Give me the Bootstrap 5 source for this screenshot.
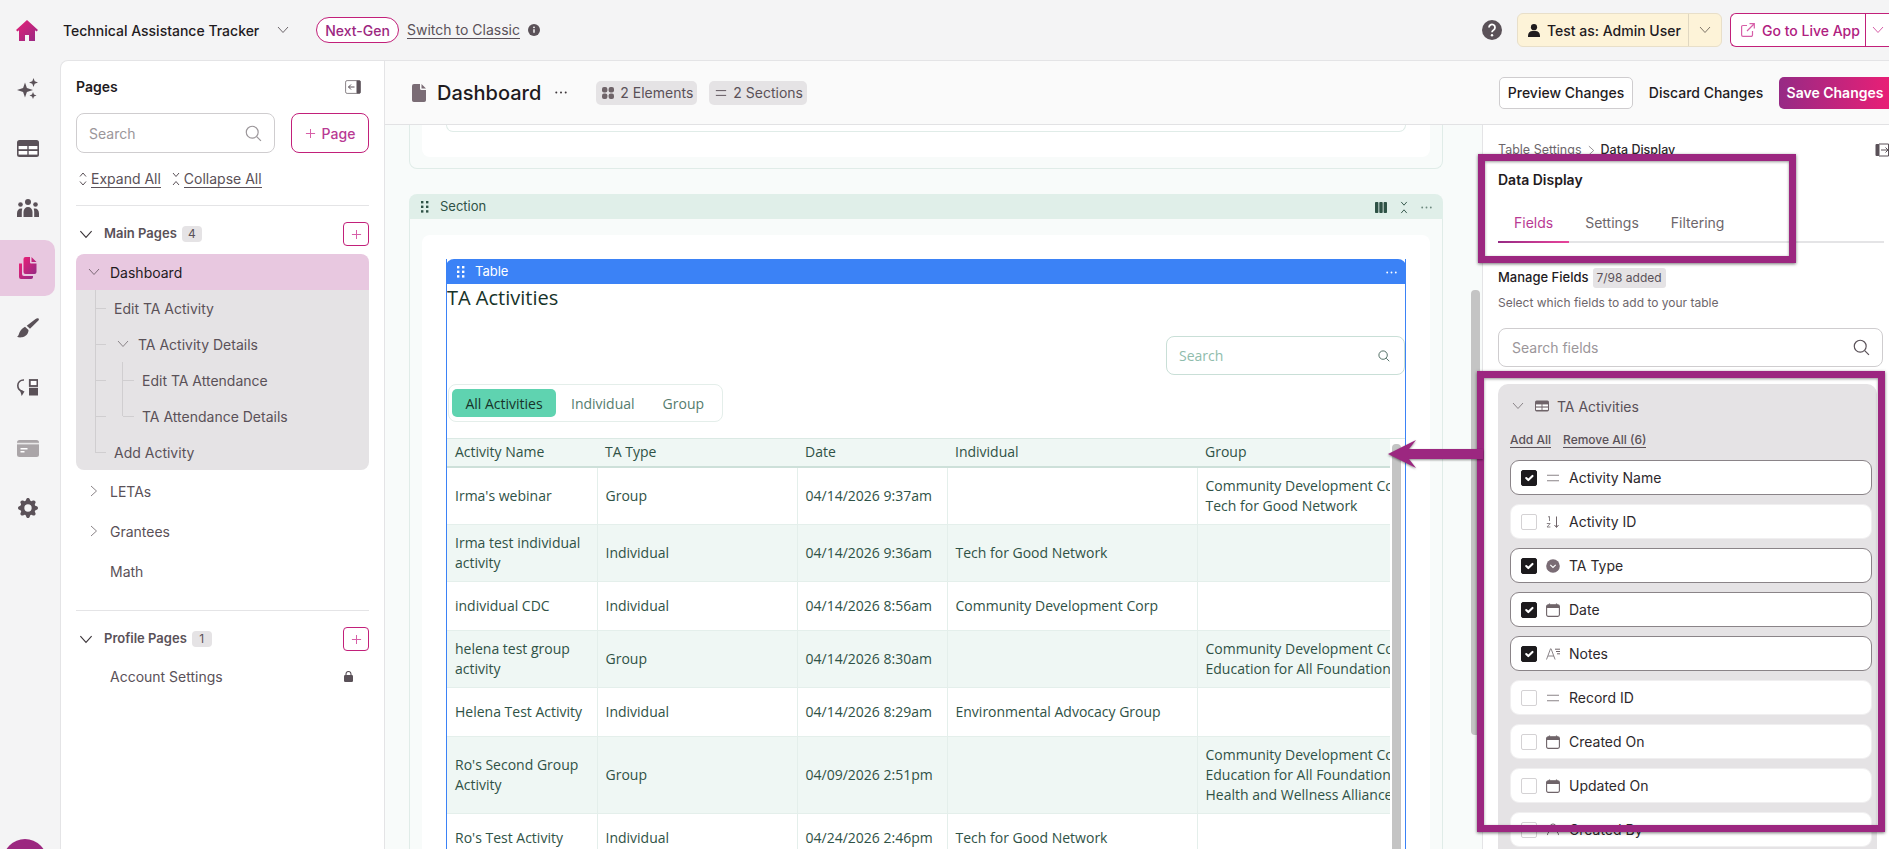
<!DOCTYPE html>
<html lang="en">
<head>
<meta charset="utf-8">
<title>Technical Assistance Tracker</title>
<link href="https://cdn.jsdelivr.net/npm/bootstrap@5.3.0/dist/css/bootstrap.min.css" rel="stylesheet">
<style>
html,body{height:100%;overflow:hidden}
body{font-family:Inter,"Liberation Sans",sans-serif;font-size:14px;color:#1f1b1e;background:#f4f4f5;position:relative}
svg{display:block;flex:none}
.app-top{height:60px;padding:0 0 0 16px}
.top-title{font-weight:500;margin-left:25px;width:198px;white-space:nowrap}
.pill-next{border:1px solid #c2207a;border-radius:14px;height:26px;width:83px;margin-left:27px;color:#9c2780;font-weight:500;background:#fff}
.link-under{color:#5a5158;border-bottom:1px solid #5a5158;line-height:17px;white-space:nowrap}
.test-box{height:34px;width:205px;background:#fdf3d8;border:1px solid #e8dfc9;border-radius:6px;font-weight:500;margin-left:15px}
.live-box{height:34px;width:159px;background:#fff;border:1px solid #c2207a;border-radius:6px 0 0 6px;border-right:0;color:#b0207f;font-weight:500;margin-left:8px}
.split-l{flex:1;padding-left:10px;gap:7px;height:100%}
.split-r{width:33px;height:100%;border-left:1px solid #e0d7c1}
.live-box .split-r{border-left-color:#c2207a}
.app-body{height:789px}
.rail{width:60px;height:789px;overflow:hidden;flex:none}
.rail-item{width:55px;height:56px;margin-bottom:4px;border-radius:0 10px 10px 0}
.rail-item.on{background:#e8c8e0}
.rail-avatar{width:44px;height:44px;border-radius:50%;background:#9c2780;margin:auto 0 -34px 3px;flex:none}
.side{width:325px;background:#fff;border-top:1px solid #e4e4e6;border-left:1px solid #e4e4e6;border-right:1px solid #e4e4e6;border-radius:8px 0 0 0;padding:16px 15px 0 15px;flex:none;overflow:hidden}
.side-title{font-weight:600;line-height:20px}
.input-box{border:1px solid #cfcdcf;border-radius:8px;background:#fff;color:#9b969a;padding:0 12px}
.side-search{width:199px;height:40px}
.btn-page{width:78px;height:40px;border:1px solid #c2207a;border-radius:8px;color:#b93a93;font-weight:500;gap:6px;background:#fff}
.expand-row{height:20px;margin-top:16px;color:#5a5158;padding-left:3px}
.expand-row span{border-bottom:1px solid #5a5158;line-height:17px}
.hair{height:1px;background:#e4e4e6}
.group-head{height:24px;padding-left:3px;color:#5a5158;font-size:13px;font-weight:600}
.count{background:#e5e3e5;border-radius:4px;font-size:12px;font-weight:400;height:16px;min-width:20px;text-align:center;line-height:16px;margin-left:5px}
.btn-add{width:26px;height:24px;border:1px solid #c2207a;border-radius:4px;background:#fff}
.page-on{height:36px;background:#e8c8e0;border-radius:8px 8px 0 0;padding-left:12px;gap:10px;margin-top:8px}
.page-tree{background:#e5e3e5;border-radius:0 0 8px 8px;position:relative;color:#5a5158}
.tree-row{height:36px;padding-left:38px;position:relative}
.tree-row::before{content:"";position:absolute;left:19px;top:0;bottom:0;border-left:1px solid #d0ced0}
.tree-row::after{content:"";position:absolute;left:19px;top:50%;width:11px;border-top:1px solid #d0ced0}
.tree-row.last::before{bottom:50%}
.tree-row.sub{padding-left:66px}
.tree-row.sub i{position:absolute;left:46px;top:0;bottom:0;border-left:1px solid #d0ced0}
.tree-row.sub i::after{content:"";position:absolute;left:0;top:18px;width:11px;border-top:1px solid #d0ced0}
.tree-row.sub.end i{bottom:18px}
.page-row{height:40px;color:#5a5158;padding-left:34px;position:relative}
.page-row svg.chev{position:absolute;left:14px;top:14px}
.main-col{flex:1;min-width:0}
.main-head{height:65px;background:#fafafa;border-top:1px solid #e4e4e6;border-bottom:1px solid #e2e2e4;padding-left:27px;flex:none}
.dash-title{font-size:20px;font-weight:500;margin-left:11px;line-height:28px}
.chip{height:24px;border-radius:5px;background:#e5e3e5;color:#5a5158;padding:0 4px 0 6px;gap:6px;white-space:nowrap}
.btn-prev{height:32px;width:134px;background:#fff;border:1px solid #cfcdcf;border-radius:5px;font-weight:500}
.btn-disc{width:146px;font-weight:500;text-align:center}
.btn-save{height:32px;width:110px;background:linear-gradient(90deg,#962a85,#e81f76);color:#fff;border-radius:5px 0 0 5px;font-weight:600;padding-left:2px}
.work{flex:1;min-height:0;overflow:hidden}
.canvas{width:1097px;background:#f8fbfa;padding-left:24px;overflow:hidden;flex:none}
.canvas-inner{width:1034px;flex:none}
.tail{height:44px;border:1px solid #e0ece8;border-top:0;border-radius:0 0 8px 8px;padding:0 12px 11px}
.tail-in{height:32px;background:#fff;border-radius:0 0 8px 8px;padding:0 24px}
.tail-in div{height:7px;border:1px solid #e0ece8;border-top:0;border-radius:0 0 8px 8px}
.sec-head{height:25px;margin-top:25px;background:#e0efe9;border-radius:8px 8px 0 0;color:#2f5246;padding:1px 11px 0 12px;gap:11px;font-size:13px}
.sec-body{border-left:1px solid #e0ece8;border-right:1px solid #e0ece8;padding:16px 12px 0;height:660px}
.sec-white{background:#fff;border-radius:8px 8px 0 0;padding:24px 24px 0;height:640px}
.tbl-frame{border:solid #3b82f6;border-width:0 1px;height:600px;overflow:hidden}
.tbl-bar{height:25px;background:#3b82f6;color:#fff;border-radius:8px 8px 0 0;margin:0 -1px;padding:1px 9px 0 11px;gap:10px;font-size:13px}
.tbl-title{font-family:"Open Sans",sans-serif;font-size:20px;line-height:28px;color:#17332a}
.tbl-search{width:239px;height:39px;margin:24px 0 0 auto;border:1px solid #c9dfd7;border-radius:8px;padding:0 14px 0 12px;font-family:"Open Sans",sans-serif;color:#8fbcac}
.seg{width:275px;height:38px;margin:9px 0 0 1px;border:1px solid #e4eeea;border-radius:8px;padding:4px 3px;font-family:"Open Sans",sans-serif;color:#557c6e}
.seg-on{width:104px;height:28px;border-radius:5px;background:#5fd3b0;color:#17332a}
.tbl-wrap{margin-top:16px}
.tbl-clip{width:943px;overflow:hidden;flex:none}
.grid-table{table-layout:fixed;width:943px;margin:0;font-family:"Open Sans",sans-serif;font-size:14px;color:#2f5246;--bs-table-bg:transparent;--bs-table-color:#2f5246}
.grid-table th{font-weight:400;background:#eff7f4;height:28px;padding:0 8px;border-top:1px solid #dbe9e4;border-bottom:2px solid #cde0d9;line-height:20px;vertical-align:middle}
.grid-table td{padding:8px;line-height:20px;height:49px;vertical-align:middle;border-bottom:1px solid #e4efeb;border-right:1px solid #e4efeb;white-space:normal}
.grid-table td:last-child{border-right:0;white-space:nowrap;overflow:hidden}
.grid-table tbody tr:nth-child(even) td{background:#eff7f4}
.tbl-track{width:15px;flex:none;padding:5px 4px 0 2px;border-top:1px solid #dbe9e4}
.tbl-thumb{height:500px;background:#c4c4c4;border-radius:4px}
.main-thumb{width:9px;height:445px;background:#c4c4c4;border-radius:4px;margin:165px 0 0 28px;flex:none}
.panel{flex:1;background:#fff;border-left:1px solid #e4e4e6;padding:15px 6px 0 15px;overflow:hidden;min-width:0}
.crumb{height:20px;font-size:12.5px;color:#6d666b;gap:6px}
.crumb b{font-weight:500;color:#2d282c}
.panel-title{margin-top:10px;line-height:20px;font-weight:600;font-size:14px}
.panel-tabs{height:40px;margin-top:13px;width:386px;border-bottom:2px solid #e4e4e6;color:#6d666b}
.panel-tab{height:38px;padding:0 16px}
.panel-tab.on{color:#b93a93;position:relative}
.panel-tab.on::after{content:"";position:absolute;left:0;right:0;bottom:-2px;height:2px;background:linear-gradient(90deg,#962a85,#e8449b)}
.panel-manage{height:20px;margin-top:25px;font-size:13px;font-weight:500}
.panel-manage span{background:#e5e3e5;border-radius:3px;font-size:12px;font-weight:400;color:#5a5158;padding:0 4px;line-height:20px;margin-left:4px}
.panel-hint{font-size:12px;color:#6d666b;margin-top:7px;line-height:16px}
.panel-search{height:39px;margin-top:17px;padding:0 12px 0 13px}
.field-group{width:379px;margin-top:17px;background:#e5e3e5;border-radius:10px 10px 0 0;padding:12px 5px 0 12px;height:480px}
.fg-head{height:20px;color:#5a5158;gap:8px;padding-left:2px}
.fg-links{height:20px;margin-top:14px;font-size:12px;font-weight:500;color:#5a5158;gap:12px}
.fg-links span{border-bottom:1px solid #5a5158;line-height:15px}
.field-row{height:35px;width:362px;margin-top:9px;background:#fff;border:1px solid #f0eff0;border-radius:9px;padding-left:10px;color:#2d282c}
.fg-links + .field-row{margin-top:10px}
.field-row.on{border-color:#8a8488}
.field-row .form-check-input{width:16px;height:16px;margin:0 9px 0 0;flex:none;border-radius:2px;border-color:#d4d2d4}
.field-row .form-check-input:checked{background-color:#1c1a1d;border-color:#1c1a1d}
.field-icon{width:14px;margin-right:9px;flex:none}
.annot{position:absolute;border:7px solid #9c2780;box-shadow:0 1px 3px rgba(0,0,0,.55),inset 0 1px 3px rgba(0,0,0,.4);pointer-events:none}
.annot-a{left:1478px;top:154px;width:318px;height:109px}
.annot-b{left:1477px;top:371px;width:408px;height:461px}
.annot-arrow{position:absolute;left:1385px;top:436px;filter:drop-shadow(0 1px 1px rgba(0,0,0,.45))}
</style>
</head>
<body>
<svg width="0" height="0" style="position:absolute">
<defs>
<linearGradient id="gp" x1="0" y1="0" x2="1" y2="1"><stop offset="0" stop-color="#e81f76"/><stop offset="1" stop-color="#962a85"/></linearGradient>
<symbol id="i-search" viewBox="0 0 16 16"><circle cx="6.8" cy="6.8" r="5.6" fill="none" stroke="currentColor" stroke-width="1.1"/><path d="M11 11l4 4" stroke="currentColor" stroke-width="1.1" fill="none"/></symbol>
<symbol id="i-down" viewBox="0 0 12 8"><path d="M1 1l5 5.5L11 1" fill="none" stroke="currentColor" stroke-width="1"/></symbol>
<symbol id="i-right" viewBox="0 0 8 12"><path d="M1 1l5.5 5L1 11" fill="none" stroke="currentColor" stroke-width="1"/></symbol>
<symbol id="i-plus" viewBox="0 0 12 12"><path d="M6 1v10M1 6h10" stroke="currentColor" stroke-width="1.1" fill="none"/></symbol>
<symbol id="i-grip" viewBox="0 0 8 12"><g fill="currentColor"><rect x="0" y="0" width="2.4" height="2.4"/><rect x="5" y="0" width="2.4" height="2.4"/><rect x="0" y="4.6" width="2.4" height="2.4"/><rect x="5" y="4.6" width="2.4" height="2.4"/><rect x="0" y="9.2" width="2.4" height="2.4"/><rect x="5" y="9.2" width="2.4" height="2.4"/></g></symbol>
<symbol id="i-dots" viewBox="0 0 12 3"><g fill="currentColor"><circle cx="1.3" cy="1.5" r="1"/><circle cx="6" cy="1.5" r="1"/><circle cx="10.7" cy="1.5" r="1"/></g></symbol>
<symbol id="i-eq" viewBox="0 0 14 8"><path d="M1 1.2h12M1 6.8h12" stroke="currentColor" stroke-width="1.1" fill="none"/></symbol>
<symbol id="i-cal" viewBox="0 0 14 14"><path d="M3.500 .5v2M10.500 .5v2" stroke="#6f6469" stroke-width="1.2"/><rect x=".6" y="1.8" width="12.8" height="11.6" rx="1.6" fill="#fff" stroke="#6f6469" stroke-width="1.1"/><path d="M.6 3.400a1.600 1.600 0 0 1 1.600-1.600h9.600a1.600 1.600 0 0 1 1.600 1.600V5H.6z" fill="#6f6469"/></symbol>
<symbol id="i-table" viewBox="0 0 22 17"><rect width="22" height="17" rx="2.500" fill="currentColor"/><g fill="#fff"><rect x="1.600" y="6" width="8.700" height="3.200"/><rect x="11.700" y="6" width="8.700" height="3.200"/><rect x="1.600" y="11" width="8.700" height="3.600"/><rect x="11.700" y="11" width="8.700" height="3.600"/></g></symbol>
<symbol id="i-collapse" viewBox="0 0 8 14"><path d="M1 1l3 3.500L7 1M1 13l3-3.500L7 13" fill="none" stroke="currentColor" stroke-width="1"/></symbol>
<symbol id="i-expand" viewBox="0 0 8 14"><path d="M1 4.500L4 1l3 3.500M1 9.500L4 13l3-3.500" fill="none" stroke="currentColor" stroke-width="1"/></symbol>
</defs>
</svg>

<header class="app-top d-flex align-items-center">
  <svg width="22" height="21" viewBox="0 0 22 21"><path d="M11 0L0 10l1.500 1.600L3 10.300V21h6v-6h4v6h6V10.300l1.500 1.300L22 10z" fill="url(#gp)"/></svg>
  <div class="top-title">Technical Assistance Tracker</div>
  <svg class="ms-3" width="12" height="8" style="color:#6d666b"><use href="#i-down"/></svg>
  <div class="pill-next d-flex align-items-center justify-content-center">Next-Gen</div>
  <span class="link-under ms-2">Switch to Classic</span>
  <svg class="ms-2" width="12" height="12" viewBox="0 0 12 12"><circle cx="6" cy="6" r="6" fill="#5a5158"/><path d="M6 5.200v3.600" stroke="#fff" stroke-width="1.400"/><circle cx="6" cy="3.300" r=".9" fill="#fff"/></svg>
  <div class="ms-auto d-flex align-items-center">
    <svg width="20" height="20" viewBox="0 0 20 20"><circle cx="10" cy="10" r="10" fill="#5a5158"/><path d="M7 7.500a3 3 0 1 1 4.600 2.500c-1 .6-1.600 1.100-1.600 2.300" fill="none" stroke="#fff" stroke-width="1.800"/><circle cx="10" cy="15.200" r="1.200" fill="#fff"/></svg>
    <div class="test-box d-flex align-items-center">
      <div class="split-l d-flex align-items-center"><svg width="12" height="13" viewBox="0 0 12 13"><circle cx="6" cy="3.200" r="3.100" fill="#1f1b1e"/><path d="M0 13v-1.500C0 8.800 2 7 4.500 7h3C10 7 12 8.800 12 11.500V13z" fill="#1f1b1e"/></svg>Test as: Admin User</div>
      <div class="split-r d-flex align-items-center justify-content-center"><svg width="12" height="8" style="color:#7d7468"><use href="#i-down"/></svg></div>
    </div>
    <div class="live-box d-flex align-items-center">
      <div class="split-l d-flex align-items-center"><svg width="14" height="14" viewBox="0 0 14 14"><path d="M6 2.500H2A1.400 1.400 0 0 0 .6 4v8A1.400 1.400 0 0 0 2 13.400h8A1.400 1.400 0 0 0 11.500 12V8M8.500.7h4.800v4.800M13 1L6 8" fill="none" stroke="#d75fa8" stroke-width="1.200"/></svg>Go to Live App</div>
      <div class="split-r d-flex align-items-center justify-content-center" style="width:24px"><svg width="12" height="8" style="color:#d75fa8"><use href="#i-down"/></svg></div>
    </div>
  </div>
</header>

<div class="app-body d-flex">
  <nav class="rail d-flex flex-column">
    <div class="rail-item d-flex align-items-center justify-content-center"><svg width="21" height="21" viewBox="0 0 21 21"><path fill="#5a5158" d="M8 4.500l1.900 5.600L16 12l-6.100 1.900L8 19.500l-1.900-5.600L0 12l6.100-1.900zM16.500 0l1.200 3.300L21 4.500l-3.300 1.200L16.500 9l-1.200-3.300L12 4.500l3.300-1.200zM16 14l1 2.500 2.500 1-2.500 1-1 2.500-1-2.500-2.500-1 2.500-1z"/></svg></div>
    <div class="rail-item d-flex align-items-center justify-content-center"><svg width="22" height="17" style="color:#5a5158"><use href="#i-table"/></svg></div>
    <div class="rail-item d-flex align-items-center justify-content-center"><svg width="22" height="18" viewBox="0 0 22 18"><g fill="#5a5158"><circle cx="11" cy="3" r="3"/><circle cx="3.500" cy="5.500" r="2.300"/><circle cx="18.500" cy="5.500" r="2.300"/><path d="M6.500 18v-5c0-3 2-5 4.500-5s4.500 2 4.500 5v5z"/><path d="M0 18v-3.500C0 11.500 1.500 9.500 4 9.500c.5 0 1 .1 1.300.3-.3 1-.5 2-.5 3V18zM22 18v-3.500c0-3-1.500-5-4-5-.5 0-1 .1-1.300.3.3 1 .5 2 .5 3V18z"/></g></svg></div>
    <div class="rail-item on d-flex align-items-center justify-content-center"><svg width="19" height="22" viewBox="0 0 19 22"><path d="M1 6.500h3V17a2 2 0 0 0 2 2h9v1.200A1.800 1.800 0 0 1 13.200 22H3a2 2 0 0 1-2-2z" fill="url(#gp)"/><path d="M5.500 2a2 2 0 0 1 2-2h4.500v5.500a1 1 0 0 0 1 1h5.500V15a2 2 0 0 1-2 2H7.500a2 2 0 0 1-2-2zM13.500 0l5 5h-5z" fill="url(#gp)"/></svg></div>
    <div class="rail-item d-flex align-items-center justify-content-center"><svg width="22" height="21" viewBox="0 0 22 21"><path d="M21.500.5c.6.600.5 1.500-.1 2.100L13 10.800l-3.300-3L18.600.9c.9-.7 2.200-1.100 2.900-.4zM8 8.800l3.500 3.200c.2 4-3 6.700-6.500 7.300-1.800.3-3.600.2-5-.5 1.200-.6 1.600-1.700 2-3 .6-2.200 2.700-5.400 6-7z" fill="#5a5158"/></svg></div>
    <div class="rail-item d-flex align-items-center justify-content-center"><svg width="21" height="18" viewBox="0 0 21 18"><path d="M7 1C3.200.8.800 3.300.8 6.500c0 2.800 1.800 5 4.700 6" fill="none" stroke="#5a5158" stroke-width="1.600"/><path d="M2.800 10.500l4.700 2-2.800 4.500z" fill="#5a5158"/><rect x="12.800" y="1" width="7.600" height="6" fill="#fff" stroke="#5a5158" stroke-width="1.800"/><rect x="12" y="8.800" width="9" height="7.700" fill="#5a5158"/></svg></div>
    <div class="rail-item d-flex align-items-center justify-content-center"><svg width="22" height="17" viewBox="0 0 22 17"><rect width="22" height="17" rx="2.500" fill="#aaa5a8"/><rect x="0" y="2.800" width="22" height="1.600" fill="#e9e8e9"/><rect x="3.500" y="8" width="7" height="1.500" fill="#fff"/><rect x="3.500" y="11" width="4" height="1.500" fill="#fff"/></svg></div>
    <div class="rail-item d-flex align-items-center justify-content-center"><svg width="20" height="20" viewBox="0 0 16 16"><path fill="#5a5158" d="M9.405 1.050c-.413-1.400-2.397-1.400-2.810 0l-.1.340a1.464 1.464 0 0 1-2.105.872l-.31-.17c-1.283-.698-2.686.705-1.987 1.987l.169.311c.446.820.023 1.841-.872 2.105l-.34.100c-1.400.413-1.400 2.397 0 2.810l.34.100a1.464 1.464 0 0 1 .872 2.105l-.17.310c-.698 1.283.705 2.686 1.987 1.987l.311-.169a1.464 1.464 0 0 1 2.105.872l.1.340c.413 1.400 2.397 1.400 2.810 0l.1-.340a1.464 1.464 0 0 1 2.105-.872l.31.170c1.283.698 2.686-.705 1.987-1.987l-.169-.311a1.464 1.464 0 0 1 .872-2.105l.34-.100c1.400-.413 1.400-2.397 0-2.810l-.34-.100a1.464 1.464 0 0 1-.872-2.105l.17-.310c.698-1.283-.705-2.686-1.987-1.987l-.311.169a1.464 1.464 0 0 1-2.105-.872l-.1-.340zM8 10.930a2.929 2.929 0 1 1 0-5.860 2.929 2.929 0 0 1 0 5.858z"/></svg></div>
    <div class="rail-avatar"></div>
  </nav>

  <aside class="side">
    <div class="side-title d-flex align-items-center justify-content-between">Pages
      <svg class="me-2" width="16" height="14" viewBox="0 0 16 14"><rect x=".6" y=".6" width="14.800" height="12.800" rx="1.500" fill="none" stroke="#8a8488" stroke-width="1"/><rect x="11.500" y=".5" width="4" height="13" rx="1" fill="#5a5158"/><path d="M9.500 7H3.500M6 4.500L3.500 7 6 9.500" fill="none" stroke="#5a5158" stroke-width="1"/></svg>
    </div>
    <div class="d-flex justify-content-between mt-3">
      <div class="input-box side-search d-flex align-items-center justify-content-between">Search<svg width="17" height="17"><use href="#i-search"/></svg></div>
      <div class="btn-page d-flex align-items-center justify-content-center"><svg width="11" height="11" style="color:#d75fa8"><use href="#i-plus"/></svg>Page</div>
    </div>
    <div class="expand-row d-flex align-items-center">
      <svg width="8" height="14" class="me-1"><use href="#i-expand"/></svg><span>Expand All</span>
      <svg width="8" height="14" class="me-1" style="margin-left:11px"><use href="#i-collapse"/></svg><span>Collapse All</span>
    </div>
    <div class="hair mt-3"></div>
    <div class="group-head d-flex align-items-center mt-3">
      <svg width="14" height="9" style="color:#3c363a;margin-right:11px"><use href="#i-down"/></svg>Main Pages<span class="count">4</span>
      <div class="btn-add ms-auto d-flex align-items-center justify-content-center"><svg width="11" height="11" style="color:#d75fa8"><use href="#i-plus"/></svg></div>
    </div>
    <div class="page-on d-flex align-items-center"><svg width="12" height="8" style="color:#7d6a78"><use href="#i-down"/></svg>Dashboard</div>
    <div class="page-tree">
      <div class="tree-row d-flex align-items-center">Edit TA Activity</div>
      <div class="tree-row d-flex align-items-center"><svg width="12" height="8" style="margin-left:3px;margin-right:9px;color:#8a8488"><use href="#i-down"/></svg>TA Activity Details</div>
      <div class="tree-row sub d-flex align-items-center"><i></i>Edit TA Attendance</div>
      <div class="tree-row sub end d-flex align-items-center"><i></i>TA Attendance Details</div>
      <div class="tree-row last d-flex align-items-center">Add Activity</div>
    </div>
    <div class="page-row d-flex align-items-center" style="margin-top:1px"><svg class="chev" width="8" height="12" style="color:#8a8488"><use href="#i-right"/></svg>LETAs</div>
    <div class="page-row d-flex align-items-center"><svg class="chev" width="8" height="12" style="color:#8a8488"><use href="#i-right"/></svg>Grantees</div>
    <div class="page-row d-flex align-items-center">Math</div>
    <div class="hair" style="margin-top:19px"></div>
    <div class="group-head d-flex align-items-center mt-3">
      <svg width="14" height="9" style="color:#3c363a;margin-right:11px"><use href="#i-down"/></svg>Profile Pages<span class="count">1</span>
      <div class="btn-add ms-auto d-flex align-items-center justify-content-center"><svg width="11" height="11" style="color:#d75fa8"><use href="#i-plus"/></svg></div>
    </div>
    <div class="page-row d-flex align-items-center justify-content-between" style="margin-top:5px;padding-right:16px">Account Settings
      <svg width="9" height="11" viewBox="0 0 9 11"><path d="M2 4.500V3a2.500 2.500 0 0 1 5 0v1.500" fill="none" stroke="#5a5158" stroke-width="1.100"/><rect y="4" width="9" height="7" rx="1.200" fill="#5a5158"/></svg>
    </div>
  </aside>

  <main class="main-col d-flex flex-column">
    <div class="main-head d-flex align-items-center">
      <svg width="14" height="18" viewBox="0 0 14 18"><path d="M2 0h6v4.500a1.500 1.500 0 0 0 1.500 1.500H14v10.200a1.800 1.800 0 0 1-1.800 1.800H1.800A1.800 1.800 0 0 1 0 16.200V2a2 2 0 0 1 2-2zM9.500 0L14 4.500H9.500z" fill="#7a6c75"/></svg>
      <span class="dash-title">Dashboard</span>
      <svg style="margin-left:14px;color:#3c363a" width="12" height="3"><use href="#i-dots"/></svg>
      <div class="chip d-flex align-items-center" style="margin-left:29px;width:101px"><svg width="12" height="12" viewBox="0 0 12 12"><g fill="#6f6469"><rect width="5.400" height="5.400" rx="2"/><rect x="6.600" width="5.400" height="5.400" rx="2"/><rect y="6.600" width="5.400" height="5.400" rx="2"/><rect x="6.600" y="6.600" width="5.400" height="5.400" rx="2"/></g></svg>2 Elements</div>
      <div class="chip d-flex align-items-center" style="margin-left:12px;width:98px"><svg width="12" height="8" style="color:#5a5158"><use href="#i-eq"/></svg>2 Sections</div>
      <div class="ms-auto d-flex align-items-center">
        <div class="btn-prev d-flex align-items-center justify-content-center">Preview Changes</div>
        <div class="btn-disc">Discard Changes</div>
        <div class="btn-save d-flex align-items-center justify-content-center">Save Changes</div>
      </div>
    </div>
    <div class="work d-flex">
      <div class="canvas d-flex">
        <div class="canvas-inner">
          <div class="tail"><div class="tail-in"><div></div></div></div>
          <div class="sec-head d-flex align-items-center">
            <svg width="8" height="12" style="color:#2f5246"><use href="#i-grip"/></svg>Section
            <div class="ms-auto d-flex align-items-center" style="gap:13px">
              <svg width="12" height="11" viewBox="0 0 12 11"><g fill="#2f5246"><rect width="3.400" height="11" rx=".8"/><rect x="4.300" width="3.400" height="11" rx=".8"/><rect x="8.600" width="3.400" height="11" rx=".8"/></g></svg>
              <svg width="8" height="13"><use href="#i-collapse"/></svg>
              <svg width="11" height="3" style="color:#6d8a7f"><use href="#i-dots"/></svg>
            </div>
          </div>
          <div class="sec-body">
            <div class="sec-white">
              <div class="tbl-frame">
                <div class="tbl-bar d-flex align-items-center"><svg width="8" height="12"><use href="#i-grip"/></svg>Table<svg class="ms-auto" width="11" height="3"><use href="#i-dots"/></svg></div>
                <div class="tbl-title">TA Activities</div>
                <div class="tbl-search d-flex align-items-center justify-content-between">Search<svg width="12" height="12" style="color:#2f5246"><use href="#i-search"/></svg></div>
                <div class="seg d-flex align-items-center">
                  <div class="seg-on d-flex align-items-center justify-content-center">All Activities</div>
                  <span style="margin-left:15px">Individual</span>
                  <span style="margin-left:28px">Group</span>
                </div>
                <div class="tbl-wrap d-flex">
                  <div class="tbl-clip">
                    <table class="table grid-table">
                      <colgroup><col style="width:150px"><col style="width:200px"><col style="width:150px"><col style="width:250px"><col style="width:193px"></colgroup>
                      <thead><tr><th>Activity Name</th><th>TA Type</th><th>Date</th><th>Individual</th><th>Group</th></tr></thead>
                      <tbody>
                        <tr><td>Irma's webinar</td><td>Group</td><td>04/14/2026 9:37am</td><td></td><td>Community Development Corp<br>Tech for Good Network</td></tr>
                        <tr><td>Irma test individual activity</td><td>Individual</td><td>04/14/2026 9:36am</td><td>Tech for Good Network</td><td></td></tr>
                        <tr><td>individual CDC</td><td>Individual</td><td>04/14/2026 8:56am</td><td>Community Development Corp</td><td></td></tr>
                        <tr><td>helena test group activity</td><td>Group</td><td>04/14/2026 8:30am</td><td></td><td>Community Development Corp<br>Education for All Foundation</td></tr>
                        <tr><td>Helena Test Activity</td><td>Individual</td><td>04/14/2026 8:29am</td><td>Environmental Advocacy Group</td><td></td></tr>
                        <tr><td>Ro's Second Group Activity</td><td>Group</td><td>04/09/2026 2:51pm</td><td></td><td>Community Development Corp<br>Education for All Foundation<br>Health and Wellness Alliance</td></tr>
                        <tr><td>Ro's Test Activity</td><td>Individual</td><td>04/24/2026 2:46pm</td><td>Tech for Good Network</td><td></td></tr>
                      </tbody>
                    </table>
                  </div>
                  <div class="tbl-track"><div class="tbl-thumb"></div></div>
                </div>
              </div>
            </div>
          </div>
        </div>
        <div class="main-thumb"></div>
      </div>
      <section class="panel">
        <div class="crumb d-flex align-items-center">Table Settings<svg width="7" height="11" style="color:#8a8488"><use href="#i-right"/></svg><b>Data Display</b>
          <svg class="ms-auto" style="margin-right:-6px" width="14" height="14" viewBox="0 0 14 14"><rect x=".5" y="1" width="4" height="12" rx="1" fill="#5a5158"/><path d="M4 1h9.500v12H4M6 7h7M10.500 4.500L13 7l-2.500 2.500" fill="none" stroke="#5a5158" stroke-width="1"/></svg>
        </div>
        <div class="panel-title">Data Display</div>
        <div class="panel-tabs d-flex">
          <div class="panel-tab on d-flex align-items-center">Fields</div>
          <div class="panel-tab d-flex align-items-center">Settings</div>
          <div class="panel-tab d-flex align-items-center">Filtering</div>
        </div>
        <div class="panel-manage d-flex align-items-center">Manage Fields<span>7/98 added</span></div>
        <div class="panel-hint">Select which fields to add to your table</div>
        <div class="input-box panel-search d-flex align-items-center justify-content-between">Search fields<svg width="17" height="17" style="color:#5a5158"><use href="#i-search"/></svg></div>
        <div class="field-group">
          <div class="fg-head d-flex align-items-center"><svg width="12" height="8" style="color:#8a8488"><use href="#i-down"/></svg><svg width="14" height="12" style="color:#6f6469;margin-left:3px"><use href="#i-table"/></svg>TA Activities</div>
          <div class="fg-links d-flex align-items-center"><span>Add All</span><span>Remove All (6)</span></div>
          <div class="field-row on d-flex align-items-center"><input class="form-check-input" type="checkbox" checked aria-label="Activity Name"><svg class="field-icon" height="8" style="color:#8a8488"><use href="#i-eq"/></svg>Activity Name</div>
          <div class="field-row d-flex align-items-center"><input class="form-check-input" type="checkbox" aria-label="Activity ID"><svg class="field-icon" height="12" viewBox="0 0 14 12"><path d="M10.500 .5v10.500M8.500 9l2 2.500 2-2.500" fill="none" stroke="#6f6469" stroke-width="1"/><path d="M2 1l1.500-.6V5M.8 7.500h3.400L1 11h3.400" fill="none" stroke="#8a8488" stroke-width="1"/></svg>Activity ID</div>
          <div class="field-row on d-flex align-items-center"><input class="form-check-input" type="checkbox" checked aria-label="TA Type"><svg class="field-icon" height="14" viewBox="0 0 14 14"><circle cx="7" cy="7" r="6.800" fill="#7a6c75"/><path d="M4.300 5.800L7 8.500l2.700-2.700" fill="none" stroke="#fff" stroke-width="1.200"/></svg>TA Type</div>
          <div class="field-row on d-flex align-items-center"><input class="form-check-input" type="checkbox" checked aria-label="Date"><svg class="field-icon" height="14"><use href="#i-cal"/></svg>Date</div>
          <div class="field-row on d-flex align-items-center"><input class="form-check-input" type="checkbox" checked aria-label="Notes"><svg class="field-icon" height="12" viewBox="0 0 14 12"><path d="M.5 11.500L4.500 .8h.6l4 10.700M2 8h6" fill="none" stroke="#8a8488" stroke-width="1"/><path d="M9 1.200h5M10 3.500h4M11 5.800h3" stroke="#6f6469" stroke-width="1" fill="none"/></svg>Notes</div>
          <div class="field-row d-flex align-items-center"><input class="form-check-input" type="checkbox" aria-label="Record ID"><svg class="field-icon" height="8" style="color:#8a8488"><use href="#i-eq"/></svg>Record ID</div>
          <div class="field-row d-flex align-items-center"><input class="form-check-input" type="checkbox" aria-label="Created On"><svg class="field-icon" height="14"><use href="#i-cal"/></svg>Created On</div>
          <div class="field-row d-flex align-items-center"><input class="form-check-input" type="checkbox" aria-label="Updated On"><svg class="field-icon" height="14"><use href="#i-cal"/></svg>Updated On</div>
          <div class="field-row d-flex align-items-center"><input class="form-check-input" type="checkbox" aria-label="Created By"><svg class="field-icon" height="13" viewBox="0 0 14 14"><circle cx="7" cy="4" r="3" fill="none" stroke="#6f6469"/><path d="M1 13c0-3 3-5 6-5s6 2 6 5" fill="none" stroke="#6f6469"/></svg>Created By</div>
        </div>
      </section>
    </div>
  </main>
</div>

<div class="annot annot-a"></div>
<div class="annot annot-b"></div>
<svg class="annot-arrow" width="100" height="36" viewBox="0 0 100 36"><path d="M3 18L31 4l-7 9h74v10H24l7 9z" fill="#9c2780"/></svg>
<script src="https://cdn.jsdelivr.net/npm/bootstrap@5.3.0/dist/js/bootstrap.bundle.min.js"></script>
</body>
</html>
